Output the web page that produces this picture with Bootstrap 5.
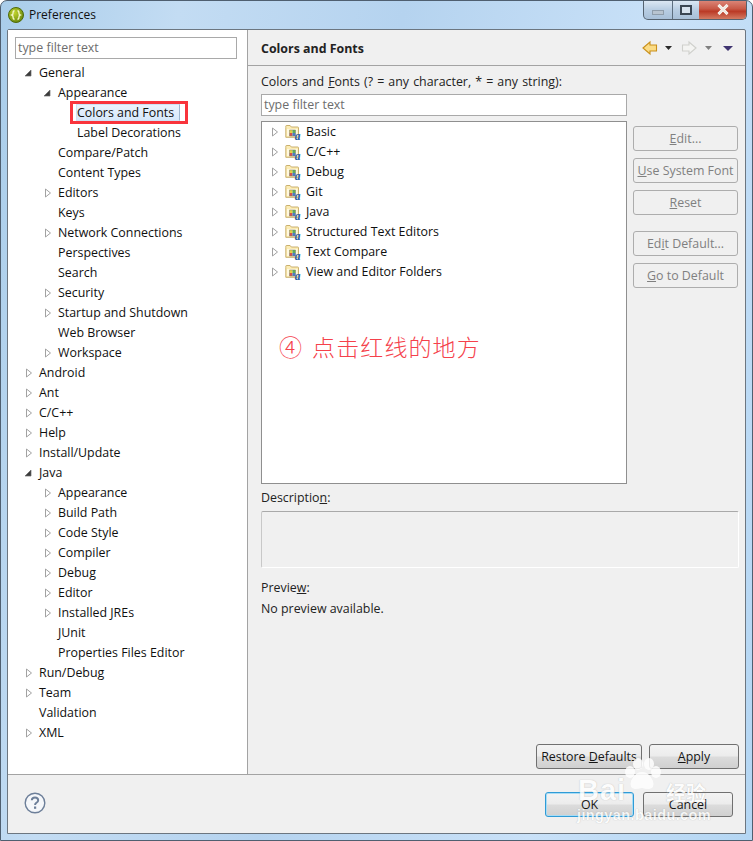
<!DOCTYPE html>
<html lang="en"><head><meta charset="utf-8"><title>Preferences</title>
<link href="https://cdn.jsdelivr.net/npm/bootstrap@5.3.0/dist/css/bootstrap.min.css" rel="stylesheet">
<style>
html,body{margin:0;width:753px;height:841px;overflow:hidden}
body{font-family:"Open Sans","Noto Sans",sans-serif;font-size:12px;line-height:20px;color:#1a1a1a;background:#fff}
.aero{position:relative;width:753px;height:841px;background:linear-gradient(100deg,#a9cdea 0,#c3dcf3 20%,#b5d3ef 45%,#c9e1f8 75%,#b4d6f3 100%);border:1px solid #4f5f70;border-radius:7px 7px 0 0;overflow:hidden}
.ttl{height:28px;padding-left:7px}
.ttl-txt{font-size:12px;margin-left:3px;color:#111}
.wctl{right:5px;top:-1px;height:20px;width:104px;border:1px solid #55626f;border-top:0;border-radius:0 0 5px 5px;overflow:hidden;background:linear-gradient(#dfeaf5,#b9cee3 50%,#a8c0d8)}
.wctl>div{height:100%}
.w-min{width:29px;border-right:1px solid #5e6f80}
.w-max{width:26px}
.w-x{flex:1;background:linear-gradient(#dd8a7c,#c85a48 45%,#bb3a26 60%,#d47b62)}
.w-min i{width:12px;height:5px;background:#b8c4d0;border:1px solid #8f9dab;margin-top:10px}
.w-max i{width:12px;height:10px;border:2px solid #3a4653;background:#d6e2ee}
.shell{margin:0 6px 0 6px;height:805px;background:#f0f0f0;border:1px solid #6c7680;border-radius:2px 2px 0 0}
.panes{height:745px;border-bottom:1px solid #a3a3a3}
.left{width:240px;background:#fff;border-right:1px solid #a3a3a3;padding-top:7px}
.flt{display:block;height:22px;line-height:20px;border:1px solid #a9a9a9;padding:0 2px;background:#fff;color:#6d6d6d;font-size:12.4px}
.flt-l{margin:0 9px 0 7px;width:222px}
.flt-r{width:366px;margin-bottom:5px}
.rw{height:20px;white-space:nowrap;font-size:12.4px;color:#10100f}
.rw svg{width:16px;height:16px;flex:none}
.lv0{padding-left:15px}.lv1{padding-left:34px}.lv2{padding-left:69px}
.lv1x{padding-left:50px}.lv0x{padding-left:31px}
.tree-l{margin-top:4px}
.right{flex:1;min-width:0}
.hdr{height:36px;border-bottom:1px solid #a3a3a3;padding:2px 9px 0 13px}
.hdr b{font-size:12.4px;color:#222;font-weight:700}
.hdr svg{margin-top:-1px}
.body-r{padding:5px 7px 0 13px}
.lab{height:23px;line-height:21px;font-size:12.4px;color:#222}
.lab-w{word-spacing:.9px}
.tbox{width:366px;height:363px;background:#fff;border:1px solid #8f8f8f}
.tbox .rw{padding-left:7px}
.tbox .fd{margin-right:5px}
.side{width:106px;padding-top:32px;margin-left:6px}
.bt{display:block;padding:0;height:25px;line-height:23px;font-size:12.4px;text-align:center;border-radius:3px;border:1px solid #adadad;color:#808080;background:#f0f0f0;opacity:1}
.bt:disabled{color:#808080;border-color:#adadad;background:#f0f0f0;opacity:1}
.bt-on{color:#151515;border-color:#707070;background:linear-gradient(#f3f3f3 0,#ececec 48%,#dcdcdc 52%,#d0d0d0 100%)}
.bt-ok{border-color:#2f9bd6;box-shadow:inset 0 0 0 1px #a8dcf5}
.mb7{margin-bottom:7px}.mb16{margin-bottom:16px}
.dsc{margin-top:3px;height:20px}
.dsc-box{width:478px;height:57px;margin-top:4px;background:#f0f0f0;border:1px solid #dcdcdc;border-top-color:#a9a9a9;border-left-color:#c8c8c8;border-radius:2px;border-bottom-color:#fff;border-right-color:#fff}
.prv{margin-top:9px;height:22px}
.nop{margin-top:-1px}
.foot{height:58px;padding:17px 12px 0 16px}
.rst{width:106px}.apl{width:90px}
.okb{width:89px}.cnb{width:90px}
.note{left:279px;top:329px;font-family:"Noto Sans CJK SC",sans-serif;font-size:23px;line-height:34px;color:#f5414b;letter-spacing:1.1px;font-weight:300;white-space:nowrap}
.note span{margin-right:9px}
.hl{left:70px;top:101px;width:118px;height:23px;border:3px solid #f9343c}
.sel{left:76px;top:104px;width:104px;height:17px;background:linear-gradient(#eaf3fd,#d6e8fa);border:1px solid #cfe2f5;border-right-color:#9db6cf}
.wm{left:576px;top:758px;width:140px;height:68px;color:#fff;pointer-events:none;text-shadow:0 0 1px rgba(110,110,110,.55)}
.wm1{left:2px;top:15px;font:700 29px/34px "Liberation Sans",sans-serif;opacity:.85;letter-spacing:1px}
.wm2{left:90px;top:22px;font:700 20px/26px "Noto Sans CJK SC",sans-serif;opacity:.85}
.wm3{left:1px;top:48px;font:700 14.5px/18px "Liberation Sans",sans-serif;opacity:.8;letter-spacing:.4px}
.wm svg{left:46px;top:0;opacity:.85}
.z1{position:relative;z-index:1}
</style></head><body>
<svg width="0" height="0" class="position-absolute">
<defs>
<symbol id="ao" viewBox="0 0 16 16"><path d="M8 5v6H2z" fill="#3b3b3b" stroke="#6b6b6b" stroke-width=".7"/></symbol>
<symbol id="ac" viewBox="0 0 16 16"><path d="M3.500 4l5 4-5 4z" fill="#fff" stroke="#a2a2a2"/></symbol>
<symbol id="fo" viewBox="0 0 16 16">
<path d="M.8 3.500V2.200q0-.7.7-.7h3.600l1.200 1.500h6.400q.8 0 .8.8v9.500H.8z" fill="#fcecb4" stroke="#c4a862" stroke-width=".9"/>
<path d="M2 5h10.500v7H2z" fill="#fff9e0"/>
<rect x="4.500" y="6" width="3" height="3" fill="#e8cf45"/><rect x="7.500" y="6" width="3" height="3" fill="#5fae58"/>
<rect x="4.500" y="9" width="3" height="3" fill="#d2544c"/><rect x="7.500" y="9" width="3" height="3" fill="#4a7cc4"/>
<path d="M4.500 6h6v6h-6z" fill="none" stroke="#7a7a6a" stroke-width=".5"/>
<text x="9.800" y="15.600" font-family="Liberation Serif,serif" font-style="italic" font-weight="700" font-size="11.500" fill="#2a5b9e">a</text>
</symbol>
</defs></svg>
<div class="aero">
<div class="ttl d-flex align-items-center">
<svg width="18" height="18" viewBox="0 0 18 18"><defs><radialGradient id="gg" cx=".4" cy=".35" r=".75"><stop offset="0" stop-color="#c3d52e"/><stop offset="1" stop-color="#5f7f08"/></radialGradient></defs><circle cx="8" cy="9" r="7.500" fill="url(#gg)" stroke="#4e6a0c"/><path d="M6.500 4.500Q4.800 5 5 7.200 5.100 8.500 3.900 9q1.200.5 1.100 1.800-.2 2.200 1.500 2.700M9.500 4.500Q11.200 5 11 7.200 10.900 8.500 12.100 9 10.900 9.500 11 10.800 11.200 13 9.500 13.500" fill="none" stroke="#f4f6c8" stroke-width="1.400"/></svg>
<span class="ttl-txt">Preferences</span>
</div>
<div class="wctl position-absolute d-flex">
<div class="w-min d-flex justify-content-center"><i class="d-block"></i></div>
<div class="w-max d-flex justify-content-center align-items-center"><i class="d-block"></i></div>
<div class="w-x d-flex justify-content-center align-items-center"><svg width="14" height="11" viewBox="0 0 14 11"><path d="M2.500 1l9 9M11.500 1l-9 9" stroke="#fff" stroke-width="3"/><path d="M2.500 1l9 9M11.500 1l-9 9" stroke="#efe9e0" stroke-width="2"/></svg></div>
</div>
<div class="shell">
<div class="panes d-flex">
<div class="left">
<div class="flt flt-l">type filter text</div>
<div class="tree-l">
<div class="rw lv0 d-flex align-items-center"><svg><use href="#ao"/></svg>General</div>
<div class="rw lv1 d-flex align-items-center"><svg><use href="#ao"/></svg>Appearance</div>
<div class="rw lv2 d-flex align-items-center z1">Colors and Fonts</div>
<div class="rw lv2 d-flex align-items-center">Label Decorations</div>
<div class="rw lv1x d-flex align-items-center">Compare/Patch</div>
<div class="rw lv1x d-flex align-items-center">Content Types</div>
<div class="rw lv1 d-flex align-items-center"><svg><use href="#ac"/></svg>Editors</div>
<div class="rw lv1x d-flex align-items-center">Keys</div>
<div class="rw lv1 d-flex align-items-center"><svg><use href="#ac"/></svg>Network Connections</div>
<div class="rw lv1x d-flex align-items-center">Perspectives</div>
<div class="rw lv1x d-flex align-items-center">Search</div>
<div class="rw lv1 d-flex align-items-center"><svg><use href="#ac"/></svg>Security</div>
<div class="rw lv1 d-flex align-items-center"><svg><use href="#ac"/></svg>Startup and Shutdown</div>
<div class="rw lv1x d-flex align-items-center">Web Browser</div>
<div class="rw lv1 d-flex align-items-center"><svg><use href="#ac"/></svg>Workspace</div>
<div class="rw lv0 d-flex align-items-center"><svg><use href="#ac"/></svg>Android</div>
<div class="rw lv0 d-flex align-items-center"><svg><use href="#ac"/></svg>Ant</div>
<div class="rw lv0 d-flex align-items-center"><svg><use href="#ac"/></svg>C/C++</div>
<div class="rw lv0 d-flex align-items-center"><svg><use href="#ac"/></svg>Help</div>
<div class="rw lv0 d-flex align-items-center"><svg><use href="#ac"/></svg>Install/Update</div>
<div class="rw lv0 d-flex align-items-center"><svg><use href="#ao"/></svg>Java</div>
<div class="rw lv1 d-flex align-items-center"><svg><use href="#ac"/></svg>Appearance</div>
<div class="rw lv1 d-flex align-items-center"><svg><use href="#ac"/></svg>Build Path</div>
<div class="rw lv1 d-flex align-items-center"><svg><use href="#ac"/></svg>Code Style</div>
<div class="rw lv1 d-flex align-items-center"><svg><use href="#ac"/></svg>Compiler</div>
<div class="rw lv1 d-flex align-items-center"><svg><use href="#ac"/></svg>Debug</div>
<div class="rw lv1 d-flex align-items-center"><svg><use href="#ac"/></svg>Editor</div>
<div class="rw lv1 d-flex align-items-center"><svg><use href="#ac"/></svg>Installed JREs</div>
<div class="rw lv1x d-flex align-items-center">JUnit</div>
<div class="rw lv1x d-flex align-items-center">Properties Files Editor</div>
<div class="rw lv0 d-flex align-items-center"><svg><use href="#ac"/></svg>Run/Debug</div>
<div class="rw lv0 d-flex align-items-center"><svg><use href="#ac"/></svg>Team</div>
<div class="rw lv0x d-flex align-items-center">Validation</div>
<div class="rw lv0 d-flex align-items-center"><svg><use href="#ac"/></svg>XML</div>
</div>
</div>
<div class="right d-flex flex-column">
<div class="hdr d-flex align-items-center justify-content-between">
<b>Colors and Fonts</b>
<svg width="94" height="16" viewBox="0 0 94 16">
<path d="M1 8l7-6v3h6.500v6H8v3z" fill="#fbdc85" stroke="#c9901c" stroke-width="1.100"/>
<path d="M23 6h7l-3.500 4z" fill="#2a2a2a"/>
<path d="M54 8l-7-6v3h-6.500v6H47v3z" fill="#f4f4f2" stroke="#cfd0cc" stroke-width="1.100"/>
<path d="M63 6h7l-3.500 4z" fill="#808080"/>
<path d="M81 6h10l-5 5z" fill="#3f3470"/>
</svg>
</div>
<div class="body-r">
<div class="lab lab-w">Colors and <u>F</u>onts (? = any character, * = any string):</div>
<div class="d-flex">
<div>
<div class="flt flt-r">type filter text</div>
<div class="tbox">
<div class="rw d-flex align-items-center"><svg><use href="#ac"/></svg><svg class="fd"><use href="#fo"/></svg>Basic</div>
<div class="rw d-flex align-items-center"><svg><use href="#ac"/></svg><svg class="fd"><use href="#fo"/></svg>C/C++</div>
<div class="rw d-flex align-items-center"><svg><use href="#ac"/></svg><svg class="fd"><use href="#fo"/></svg>Debug</div>
<div class="rw d-flex align-items-center"><svg><use href="#ac"/></svg><svg class="fd"><use href="#fo"/></svg>Git</div>
<div class="rw d-flex align-items-center"><svg><use href="#ac"/></svg><svg class="fd"><use href="#fo"/></svg>Java</div>
<div class="rw d-flex align-items-center"><svg><use href="#ac"/></svg><svg class="fd"><use href="#fo"/></svg>Structured Text Editors</div>
<div class="rw d-flex align-items-center"><svg><use href="#ac"/></svg><svg class="fd"><use href="#fo"/></svg>Text Compare</div>
<div class="rw d-flex align-items-center"><svg><use href="#ac"/></svg><svg class="fd"><use href="#fo"/></svg>View and Editor Folders</div>
</div>
</div>
<div class="side">
<button class="btn bt mb7 w-100" disabled><u>E</u>dit...</button>
<button class="btn bt mb7 w-100" disabled><u>U</u>se System Font</button>
<button class="btn bt mb16 w-100" disabled><u>R</u>eset</button>
<button class="btn bt mb7 w-100" disabled>Ed<u>i</u>t Default...</button>
<button class="btn bt w-100" disabled><u>G</u>o to Default</button>
</div>
</div>
<div class="lab dsc">Descriptio<u>n</u>:</div>
<div class="dsc-box"></div>
<div class="lab prv">Previe<u>w</u>:</div>
<div class="lab nop">No preview available.</div>
</div>
<div class="d-flex justify-content-end mt-auto" style="padding:0 6px 5px 0;gap:7px">
<button class="btn bt bt-on rst">Restore <u>D</u>efaults</button>
<button class="btn bt bt-on apl"><u>A</u>pply</button>
</div>
</div>
</div>
<div class="foot d-flex justify-content-between">
<svg width="22" height="22" viewBox="0 0 22 22" class="d-block"><circle cx="11" cy="11" r="9.800" fill="#f5f7fa" stroke="#6d7f99" stroke-width="1.400"/><path d="M7.800 8.300Q8 5.500 11 5.500t3.200 2.700q0 1.700-1.900 2.600-1.200.6-1.200 2.200" fill="none" stroke="#6d7f99" stroke-width="2"/><rect x="10" y="14.500" width="2.200" height="2.300" fill="#6d7f99"/></svg>
<div class="d-flex" style="gap:9px">
<button class="btn bt bt-on bt-ok okb">OK</button>
<button class="btn bt bt-on cnb">Cancel</button>
</div>
</div>
</div>
</div>
<div class="sel position-absolute"></div>
<div class="hl position-absolute"></div>
<div class="note position-absolute"><span>④</span>点击红线的地方</div>
<div class="wm position-absolute">
<svg class="position-absolute" width="40" height="36" viewBox="0 0 40 36"><g fill="#fff"><ellipse cx="8" cy="14" rx="5" ry="6"/><ellipse cx="16" cy="6" rx="5" ry="6"/><ellipse cx="27" cy="6" rx="5" ry="6"/><ellipse cx="34" cy="14" rx="5" ry="6"/><path d="M20 14q7 0 11 9 2 7-4 8-4 0-7-1-4 1-7 1-6-1-4-8 4-9 11-9z"/></g></svg>
<div class="wm1 position-absolute">Bai</div>
<div class="wm2 position-absolute">经验</div>
<div class="wm3 position-absolute">jingyan.baidu.com</div>
</div>
</body></html>
